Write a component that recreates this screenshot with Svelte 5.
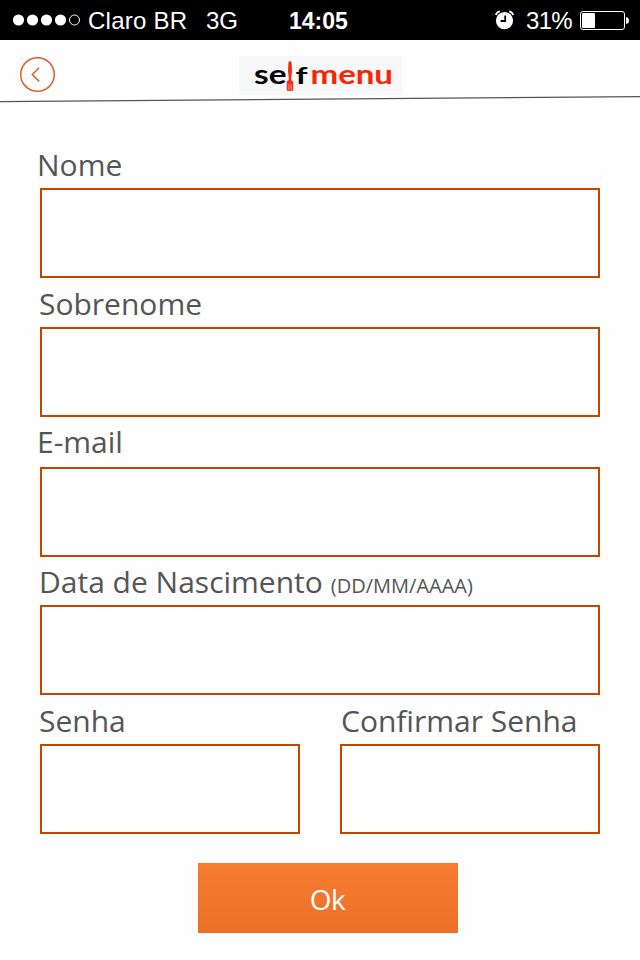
<script>
  const fields = [
    { id: 'nome', label: 'Nome', cls: 'nome' },
    { id: 'sobrenome', label: 'Sobrenome', cls: 'sobrenome' },
    { id: 'email', label: 'E-mail', cls: 'email' },
    { id: 'nascimento', label: 'Data de Nascimento', hint: '(DD/MM/AAAA)', cls: 'nascimento' }
  ];
</script>

<div class="screen">
  <div class="status">
    <svg class="signal" width="70" height="14" viewBox="0 0 70 14">
      {#each [0, 1, 2, 3] as i}
        <circle cx={6.5 + i * 14} cy="7" r="5.6" fill="#fff" />
      {/each}
      <circle cx="62.5" cy="7" r="5" fill="none" stroke="#fff" stroke-width="1" />
    </svg>
    <span class="carrier">Claro BR</span>
    <span class="network">3G</span>
    <span class="clock">14:05</span>
    <svg class="alarm" width="20" height="20" viewBox="0 0 20 20">
      <circle cx="9.5" cy="10.6" r="8.6" fill="#fff" />
      <path d="M.9 5Q1.6 2 4.8 1.4M18.1 5Q17.4 2 14.2 1.4" fill="none" stroke="#fff" stroke-width="1.9" />
      <path d="M10.2 5.4V11H5.6" fill="none" stroke="#000" stroke-width="1.8" />
    </svg>
    <span class="percent">31%</span>
    <svg class="battery" width="50" height="20" viewBox="0 0 50 20">
      <rect x=".5" y=".5" width="44" height="18" rx="2.5" fill="none" stroke="#fff" />
      <rect x="2" y="2" width="13" height="15" rx="1" fill="#fff" />
      <path d="M46 6Q49 6.5 49 9.5T46 13Z" fill="#fff" />
    </svg>
  </div>

  <header>
    <button class="back" aria-label="Voltar">
      <svg width="36" height="36" viewBox="0 0 36 36" fill="none" stroke="#dc602c">
        <circle cx="17.5" cy="17.5" r="16.8" stroke-width="1.5" />
        <path d="M19.2 10.8L12.3 17.5L19.2 24.4" stroke-width="1.5" />
      </svg>
    </button>
    <svg class="logo" width="163" height="39" viewBox="0 0 163 39">
      <rect width="163" height="39" fill="#f8f8f8" />
      <g font-family="Lato, sans-serif" font-weight="700" font-size="27">
        <text x="15" y="27.5" textLength="32.5" lengthAdjust="spacingAndGlyphs">se</text>
        <text x="56.5" y="27.5" textLength="12" lengthAdjust="spacingAndGlyphs" font-size="23.5">f</text>
        <text x="71.5" y="27.5" textLength="82.5" lengthAdjust="spacingAndGlyphs" fill="#fc2204">menu</text>
      </g>
      <g fill="#f52a12">
        <path d="M49.4 6.5Q51 3.5 52.6 6.5L53 15L52.1 23Q52.4 25 54.2 25.5V33.5Q54.2 35 53 35H49Q47.8 35 47.8 33.5V25.5Q49.6 25 49.9 23L49 15Z" />
        <path d="M49.4 28V34.5M51 28V34.5M52.6 28V34.5" stroke="#f8c5be" stroke-width=".5" />
      </g>
    </svg>
    <svg class="rule" width="640" height="8" viewBox="0 0 640 8">
      <path d="M0 6.6L640 1.6" stroke="#555" stroke-width="1.1" />
    </svg>
  </header>

  <form onsubmit={(e) => e.preventDefault()}>
    {#each fields as f}
      <div class="field {f.cls}">
        <label for={f.id}><span class="name">{f.label}</span>{#if f.hint}<small>{f.hint}</small>{/if}</label>
        <input id={f.id} type="text" />
      </div>
    {/each}
    <div class="pair">
      <div class="field senha">
        <label for="senha"><span class="name">Senha</span></label>
        <input id="senha" type="password" />
      </div>
      <div class="field confirmar">
        <label for="confirmar"><span class="name">Confirmar Senha</span></label>
        <input id="confirmar" type="password" />
      </div>
    </div>
    <button class="ok" type="submit"><span>Ok</span></button>
  </form>
</div>

<style>
  :global(body) { margin: 0; background: #fff; }
  .screen { width: 640px; height: 960px; overflow: hidden; background: #fefefe; font-family: "Open Sans", "Noto Sans", sans-serif; }
  .status { display: flex; align-items: flex-start; height: 40px; background: #000; color: #fff; font: 24px/42px "Liberation Sans", Arial, sans-serif; white-space: nowrap; }
  .status span { flex: none; height: 40px; }
  .status svg { flex: none; display: block; }
  .signal { margin: 13px 0 0 12px; }
  .carrier { width: 118px; margin-left: 6px; letter-spacing: .25px; }
  .network { width: 83px; }
  .clock { width: 206px; font-weight: 700; font-size: 23px; }
  .alarm { margin-top: 10px; }
  .percent { width: 54px; margin-left: 11px; letter-spacing: -.7px; }
  .battery { margin-top: 11px; }

  header { display: grid; grid-template-columns: 239px 1fr; grid-template-rows: 55px 8px; height: 63px; }
  button { border: 0; padding: 0; font-family: inherit; }
  .back { display: block; width: 36px; height: 36px; margin: 17px 0 0 20px; background: none; }
  .back svg, .logo, .rule { display: block; }
  .logo { margin-top: 16px; }
  .rule { grid-column: 1 / 3; }

  form { padding: 41px 40px 0; }
  label { display: flex; align-items: baseline; height: 42px; color: #555; font-size: 30px; line-height: 42px; white-space: nowrap; }
  small { margin-left: 8px; font-size: 20px; }
  input { display: block; box-sizing: border-box; width: 100%; height: 90px; margin: 2px 0 0; padding: 0 20px; border: 2px solid #bf4800; border-radius: 0; background: #fff; outline: none; font: 30px "Open Sans", sans-serif; }
  .nome label, .email label { margin-left: -3px; }
  .sobrenome, .senha, .confirmar { padding-top: 5px; }
  .sobrenome label, .nascimento label, .senha label { margin-left: -1px; }
  .confirmar label { margin-left: 1px; }
  .email { padding-top: 4px; }
  .email input { margin-top: 4px; }
  .nascimento { padding-top: 4px; }
  .pair { display: grid; grid-template-columns: 260px 260px; gap: 40px; }
  .ok { display: block; width: 260px; height: 70px; margin: 29px 0 0 158px; background: linear-gradient(#f77b30, #ec7028); color: #fff; font-size: 28px; line-height: 72px; }
  .ok span { display: block; height: 70px; padding-right: 1px; letter-spacing: -.5px; }
</style>
